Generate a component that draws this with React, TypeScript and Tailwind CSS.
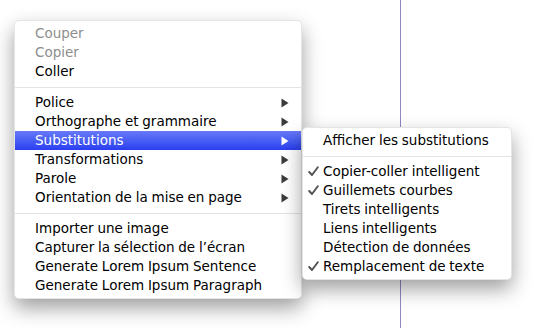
import React from 'react';

type Item =
  | { kind: 'sep' }
  | { kind: 'item'; label: string; disabled?: boolean; submenu?: boolean; active?: boolean; checked?: boolean };

const mainItems: Item[] = [
  { kind: 'item', label: 'Couper', disabled: true },
  { kind: 'item', label: 'Copier', disabled: true },
  { kind: 'item', label: 'Coller' },
  { kind: 'sep' },
  { kind: 'item', label: 'Police', submenu: true },
  { kind: 'item', label: 'Orthographe et grammaire', submenu: true },
  { kind: 'item', label: 'Substitutions', submenu: true, active: true },
  { kind: 'item', label: 'Transformations', submenu: true },
  { kind: 'item', label: 'Parole', submenu: true },
  { kind: 'item', label: 'Orientation de la mise en page', submenu: true },
  { kind: 'sep' },
  { kind: 'item', label: 'Importer une image' },
  { kind: 'item', label: 'Capturer la sélection de l’écran' },
  { kind: 'item', label: 'Generate Lorem Ipsum Sentence' },
  { kind: 'item', label: 'Generate Lorem Ipsum Paragraph' },
];

const subItems: Item[] = [
  { kind: 'item', label: 'Afficher les substitutions' },
  { kind: 'sep' },
  { kind: 'item', label: 'Copier-coller intelligent', checked: true },
  { kind: 'item', label: 'Guillemets courbes', checked: true },
  { kind: 'item', label: 'Tirets intelligents' },
  { kind: 'item', label: 'Liens intelligents' },
  { kind: 'item', label: 'Détection de données' },
  { kind: 'item', label: 'Remplacement de texte', checked: true },
];

function Arrow({ white }: { white?: boolean }) {
  return (
    <svg width="8" height="10" viewBox="0 0 8 10" className="shrink-0">
      <path d="M0.5 0.5 L7.5 5 L0.5 9.5 Z" fill={white ? '#ffffff' : '#3a3a3a'} />
    </svg>
  );
}

function Check() {
  return (
    <svg width="11" height="11" viewBox="0 0 11 11" className="absolute left-[5px] top-[4px]">
      <path d="M1.2 6 L4 9 L9.8 1.2" fill="none" stroke="#505050" strokeWidth="1.9" strokeLinecap="round" strokeLinejoin="round" />
    </svg>
  );
}

function Menu({ items, className }: { items: Item[]; className: string }) {
  return (
    <div
      className={`absolute bg-white rounded-[5px] border border-black/10 py-[3px] shadow-[0_9px_20px_rgba(0,0,0,0.38)] ${className}`}
    >
      {items.map((it, i) =>
        it.kind === 'sep' ? (
          <div key={i} className="h-3 flex items-center">
            <div className="h-px w-full bg-[#e3e3e3]" />
          </div>
        ) : (
          <div
            key={i}
            className={`h-[19px] flex items-center pl-[20px] pr-3 relative ${
              it.active ? 'bg-gradient-to-b from-[#6878f7] to-[#2b3cf0] text-white' : it.disabled ? 'text-[#8e8e8e]' : 'text-black'
            }`}
          >
            {it.checked && <Check />}
            <span className="flex-1 whitespace-nowrap pt-px">{it.label}</span>
            {it.submenu && <Arrow white={it.active} />}
          </div>
        )
      )}
    </div>
  );
}

export default function App() {
  return (
    <div className="relative w-[545px] h-[328px] bg-white overflow-hidden font-['DejaVu_Sans',sans-serif] text-[13.5px] leading-none [word-spacing:-0.5px]">
      <div className="ml-[400px] h-full w-px bg-[#8e8ac6]" />
      <Menu items={mainItems} className="left-[14px] top-[20px] w-[288px]" />
      <Menu items={subItems} className="left-[302px] top-[127px] w-[210px]" />
    </div>
  );
}
